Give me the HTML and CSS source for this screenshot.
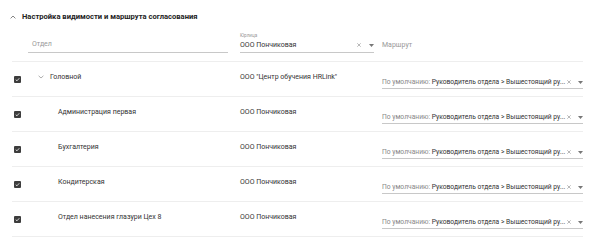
FILE: index.html
```html
<!DOCTYPE html>
<html lang="ru">
<head>
<meta charset="utf-8">
<link rel="stylesheet" href="styles.css">
</head>
<body>
<div class="page">
  <div class="section-head">
    <svg class="chev-up" width="6" height="4" viewBox="0 0 6 4"><path d="M0.6 3.4 L3 1 L5.4 3.4" fill="none" stroke="#777" stroke-width="0.9"/></svg>
    <span class="title">Настройка видимости и маршрута согласования</span>
  </div>
  <div class="filters">
    <div class="field field-dept"><span class="placeholder">Отдел</span></div>
    <div class="field field-org">
      <span class="label">Юрлица</span>
      <div class="value-row">
        <span class="value">ООО Пончиковая</span>
        <svg class="clear" width="4" height="4" viewBox="0 0 4 4"><path d="M0.3 0.3 L3.7 3.7 M3.7 0.3 L0.3 3.7" stroke="#888" stroke-width="0.6"/></svg>
        <svg class="caret" width="5" height="3" viewBox="0 0 5 3"><path d="M0 0 H5 L2.5 3 Z" fill="#777"/></svg>
      </div>
    </div>
    <div class="route-head">Маршрут</div>
  </div>
  <div class="rows">
    <div class="row">
      <div class="cb-cell"><span class="cb"><svg viewBox="0 0 8 8"><path d="M2 4.2 L3.4 5.5 L6 2.6" fill="none" stroke="#fff" stroke-width="0.9"/></svg></span></div>
      <div class="name-cell root"><svg class="chev-down" width="6" height="4" viewBox="0 0 6 4"><path d="M0.6 0.8 L3 3 L5.4 0.8" fill="none" stroke="#999" stroke-width="0.8"/></svg><span>Головной</span></div>
      <div class="org-cell">ООО "Центр обучения HRLink"</div>
      <div class="route-cell"><span class="route-text"><span class="muted">По умолчанию: </span>Руководитель отдела &gt; Вышестоящий ру...</span><svg class="clear" width="4" height="4" viewBox="0 0 4 4"><path d="M0.3 0.3 L3.7 3.7 M3.7 0.3 L0.3 3.7" stroke="#888" stroke-width="0.6"/></svg><svg class="caret" width="5" height="3" viewBox="0 0 5 3"><path d="M0 0 H5 L2.5 3 Z" fill="#777"/></svg></div>
    </div>
    <div class="row">
      <div class="cb-cell"><span class="cb"><svg viewBox="0 0 8 8"><path d="M2 4.2 L3.4 5.5 L6 2.6" fill="none" stroke="#fff" stroke-width="0.9"/></svg></span></div>
      <div class="name-cell child"><span>Администрация первая</span></div>
      <div class="org-cell">ООО Пончиковая</div>
      <div class="route-cell"><span class="route-text"><span class="muted">По умолчанию: </span>Руководитель отдела &gt; Вышестоящий ру...</span><svg class="clear" width="4" height="4" viewBox="0 0 4 4"><path d="M0.3 0.3 L3.7 3.7 M3.7 0.3 L0.3 3.7" stroke="#888" stroke-width="0.6"/></svg><svg class="caret" width="5" height="3" viewBox="0 0 5 3"><path d="M0 0 H5 L2.5 3 Z" fill="#777"/></svg></div>
    </div>
    <div class="row">
      <div class="cb-cell"><span class="cb"><svg viewBox="0 0 8 8"><path d="M2 4.2 L3.4 5.5 L6 2.6" fill="none" stroke="#fff" stroke-width="0.9"/></svg></span></div>
      <div class="name-cell child"><span>Бухгалтерия</span></div>
      <div class="org-cell">ООО Пончиковая</div>
      <div class="route-cell"><span class="route-text"><span class="muted">По умолчанию: </span>Руководитель отдела &gt; Вышестоящий ру...</span><svg class="clear" width="4" height="4" viewBox="0 0 4 4"><path d="M0.3 0.3 L3.7 3.7 M3.7 0.3 L0.3 3.7" stroke="#888" stroke-width="0.6"/></svg><svg class="caret" width="5" height="3" viewBox="0 0 5 3"><path d="M0 0 H5 L2.5 3 Z" fill="#777"/></svg></div>
    </div>
    <div class="row">
      <div class="cb-cell"><span class="cb"><svg viewBox="0 0 8 8"><path d="M2 4.2 L3.4 5.5 L6 2.6" fill="none" stroke="#fff" stroke-width="0.9"/></svg></span></div>
      <div class="name-cell child"><span>Кондитерская</span></div>
      <div class="org-cell">ООО Пончиковая</div>
      <div class="route-cell"><span class="route-text"><span class="muted">По умолчанию: </span>Руководитель отдела &gt; Вышестоящий ру...</span><svg class="clear" width="4" height="4" viewBox="0 0 4 4"><path d="M0.3 0.3 L3.7 3.7 M3.7 0.3 L0.3 3.7" stroke="#888" stroke-width="0.6"/></svg><svg class="caret" width="5" height="3" viewBox="0 0 5 3"><path d="M0 0 H5 L2.5 3 Z" fill="#777"/></svg></div>
    </div>
    <div class="row">
      <div class="cb-cell"><span class="cb"><svg viewBox="0 0 8 8"><path d="M2 4.2 L3.4 5.5 L6 2.6" fill="none" stroke="#fff" stroke-width="0.9"/></svg></span></div>
      <div class="name-cell child"><span>Отдел нанесения глазури Цех 8</span></div>
      <div class="org-cell">ООО Пончиковая</div>
      <div class="route-cell"><span class="route-text"><span class="muted">По умолчанию: </span>Руководитель отдела &gt; Вышестоящий ру...</span><svg class="clear" width="4" height="4" viewBox="0 0 4 4"><path d="M0.3 0.3 L3.7 3.7 M3.7 0.3 L0.3 3.7" stroke="#888" stroke-width="0.6"/></svg><svg class="caret" width="5" height="3" viewBox="0 0 5 3"><path d="M0 0 H5 L2.5 3 Z" fill="#777"/></svg></div>
    </div>
  </div>
</div>
</body>
</html>
```

FILE: styles.css
```css
* { box-sizing: border-box; }
body {
  margin: 0;
  background: #fff;
  font-family: Roboto, "Noto Sans", sans-serif;
  color: #333;
  font-size: 7px;
}
.page {
  width: 602px;
  height: 240px;
  overflow: hidden;
}
.section-head {
  display: flex;
  align-items: center;
  padding: 12px 0 0 10px;
  height: 22px;
}
.chev-up { margin-right: 6px; }
.title {
  font-weight: 700;
  font-size: 7.6px;
  line-height: 10px;
  color: #222;
}
.filters {
  display: flex;
  align-items: flex-end;
  margin-left: 12px;
  width: 571px;
  padding: 11px 0 8px 0;
  border-bottom: 1px solid #eeeeee;
}
.field {
  border-bottom: 1px solid #c8c8c8;
  padding-bottom: 2px;
}
.field-dept {
  margin-left: 16px;
  width: 200px;
  padding-left: 4px;
}
.placeholder {
  display: block;
  line-height: 10px;
  color: #999;
  padding-bottom: 1px;
}
.field-org {
  margin-left: 12px;
  width: 134px;
  display: flex;
  flex-direction: column;
  gap: 1px;
}
.label {
  font-size: 4.6px;
  line-height: 6px;
  color: #999;
}
.value-row {
  display: flex;
  align-items: center;
  line-height: 10px;
}
.value { flex: 1; color: #333; }
.clear {
  flex: none;
  margin-right: 8px;
}
.caret { flex: none; }
.route-head {
  margin-left: 8px;
  line-height: 10px;
  color: #999;
  padding-bottom: 3px;
}
.rows {
  margin-left: 12px;
  width: 571px;
}
.row {
  display: grid;
  grid-template-columns: 26px 202px 142px minmax(0, 1fr);
  align-items: start;
  height: 35px;
  border-bottom: 1px solid #eeeeee;
}
.cb-cell { padding: 14px 0 0 2px; }
.cb {
  display: block;
  width: 7px;
  height: 7px;
  border-radius: 1px;
  background: #3d3d3d;
}
.cb svg { display: block; width: 7px; height: 7px; }
.name-cell {
  display: flex;
  align-items: center;
  margin-top: 10px;
  line-height: 10px;
}
.name-cell.child { padding-left: 20px; }
.chev-down { margin-right: 6px; }
.org-cell {
  margin-top: 10px;
  line-height: 10px;
  white-space: nowrap;
}
.route-cell {
  margin-top: 15px;
  display: flex;
  align-items: center;
  line-height: 10px;
  padding-bottom: 1px;
  border-bottom: 1px solid #c8c8c8;
  white-space: nowrap;
  min-width: 0;
}
.route-text {
  flex: 1;
  min-width: 0;
  color: #333;
  overflow: hidden;
  font-size: 6.7px;
}
.muted { color: #888; }
.route-cell .clear { margin: 0 7px 0 1px; }
```
